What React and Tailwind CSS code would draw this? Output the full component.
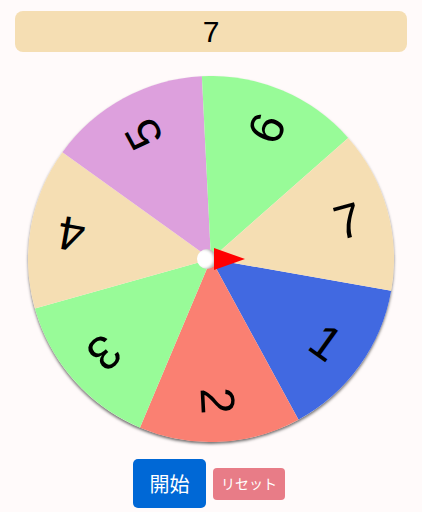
import { useState } from 'react';

const items = [
  { label: '1', color: '#4169e1' },
  { label: '2', color: '#fa8072' },
  { label: '3', color: '#98fb98' },
  { label: '4', color: '#f5deb3' },
  { label: '5', color: '#dda0dd' },
  { label: '6', color: '#98fb98' },
  { label: '7', color: '#f5deb3' },
];

const R = 183;
const START = 10; // degrees, clockwise from 3 o'clock

function sector(a0, a1) {
  const r0 = (a0 * Math.PI) / 180;
  const r1 = (a1 * Math.PI) / 180;
  const x0 = R + R * Math.cos(r0);
  const y0 = R + R * Math.sin(r0);
  const x1 = R + R * Math.cos(r1);
  const y1 = R + R * Math.sin(r1);
  return `M${R} ${R} L${x0} ${y0} A${R} ${R} 0 0 1 ${x1} ${y1} Z`;
}

export default function App() {
  const [result] = useState('7');
  const step = 360 / items.length;

  return (
    <div className="min-h-screen bg-[#fffafa] font-['Liberation_Sans','Noto_Sans_CJK_JP',sans-serif]">
      <div className="pt-[11px] px-[15px]">
        <div className="h-[41px] rounded-lg bg-[#f5deb3] flex items-center justify-center text-[30px] text-black">
          {result}
        </div>
      </div>

      {/* wheel */}
      <div className="mt-[24px] flex justify-center">
        <div className="relative w-[366px] h-[366px] rounded-full shadow-[0_2px_3px_rgba(0,0,0,0.55)]">
          <svg width="366" height="366" viewBox="0 0 366 366" className="block">
            {items.map((it, i) => (
              <path
                key={i}
                d={sector(START + i * step, START + (i + 1) * step)}
                fill={it.color}
              />
            ))}
            {items.map((it, i) => {
              const a = START + (i + 0.5) * step;
              const rad = (a * Math.PI) / 180;
              const cx = R + 142 * Math.cos(rad);
              const cy = R + 142 * Math.sin(rad);
              return (
                <g key={i} transform={`translate(${cx} ${cy}) rotate(${a})`}>
                  <text
                    x="0"
                    y="17"
                    textAnchor="middle"
                    fontSize="48"
                    fill="#000"
                    fontFamily="Liberation Sans, sans-serif"
                  >
                    {it.label}
                  </text>
                </g>
              );
            })}
          </svg>

          {/* pointer */}
          <div className="absolute left-[169px] top-[173px] w-[20px] h-[20px] rounded-full bg-white shadow-[inset_-3px_0_3px_rgba(0,0,0,0.3)]" />
          <svg
            className="absolute left-[185px] top-[171px]"
            width="33"
            height="24"
            viewBox="0 0 33 24"
          >
            <polygon points="1,1 32,12 1,23" fill="#ff0000" />
          </svg>
        </div>
      </div>

      <div className="mt-[17px] pr-[4px] flex items-center justify-center gap-[7px] font-['Noto_Sans_CJK_JP',sans-serif]">
        <button className="w-[73px] h-[49px] rounded-[5px] bg-[#0068d6] text-white text-[20px]">
          開始
        </button>
        <button className="w-[72px] h-[32px] rounded-[4px] bg-[#e87c87] text-white text-[14px]">
          リセット
        </button>
      </div>
    </div>
  );
}
